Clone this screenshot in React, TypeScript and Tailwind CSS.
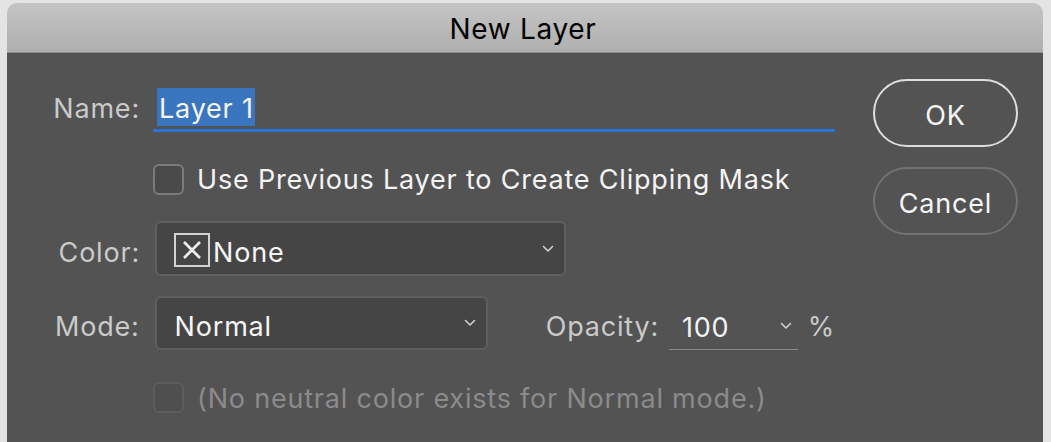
import React from 'react';

const Chevron: React.FC<{ className?: string }> = ({ className }) => (
  <svg width="12" height="8" viewBox="0 0 12 8" className={className}>
    <path d="M1.5 1.5 L6 6 L10.5 1.5" fill="none" stroke="currentColor" strokeWidth="1.6" strokeLinecap="round" strokeLinejoin="round" />
  </svg>
);

const Checkbox: React.FC<{ disabled?: boolean }> = ({ disabled }) => (
  <div
    className={`w-[31px] h-[31px] rounded-[6px] border-2 shrink-0 ${
      disabled ? 'border-[#5d5d5d] bg-[#4f4f4f]' : 'border-[#7b7b7b] bg-[#4a4a4a]'
    }`}
  />
);

export default function App() {
  return (
    <div className="w-[1051px] h-[442px] overflow-hidden bg-[#e4e4e4] pt-[3px] pl-[7px] font-['Inter','Liberation_Sans',sans-serif]">
      <div className="w-[1036px] h-[450px] rounded-t-[10px] overflow-hidden flex flex-col">
        {/* Title bar */}
        <div className="h-[50px] flex items-center justify-center bg-gradient-to-b from-[#c4c4c4] to-[#afafaf] border-b border-[#8e8e8e]">
          <span className="text-[28px] text-black tracking-[0.7px] mt-[3px] -ml-[4px]">New Layer</span>
        </div>

        {/* Body */}
        <div className="flex-1 bg-[#535353] flex">
          {/* Form */}
          <div className="w-[828px] flex flex-col text-[27px] tracking-[0.8px] whitespace-nowrap">
            {/* Name */}
            <div className="flex items-center h-[48px] mt-[31px]">
              <div className="w-[133px] text-right text-[#cacaca] pt-[3px]">Name:</div>
              <div className="ml-[13px] flex-1 h-full flex items-center border-b-[3px] border-[#2b72dc]">
                <span className="ml-[4px] pl-[2px] pr-[1px] h-[38px] leading-[41px] bg-[#3a75bf] text-[#f6f6f6]">Layer 1</span>
              </div>
            </div>

            {/* Clipping mask */}
            <div className="flex items-center h-[32px] mt-[31px] ml-[146px]">
              <Checkbox />
              <span className="ml-[13px] pt-[3px] text-[#f4f4f4]">Use Previous Layer to Create Clipping Mask</span>
            </div>

            {/* Color */}
            <div className="flex items-center mt-[26px]">
              <div className="w-[133px] text-right text-[#cacaca] pt-[9px]">Color:</div>
              <div className="ml-[15px] w-[411px] h-[55px] rounded-[6px] border-2 border-[#5f5f5f] bg-[#454545] flex items-center pl-[17px] pr-[10px]">
                <div className="w-[36px] h-[34px] shrink-0 border-2 border-[#d2d2d2] flex items-center justify-center mt-[2px]">
                  <svg width="22" height="22" viewBox="0 0 22 22">
                    <path d="M3 3 L19 19 M19 3 L3 19" stroke="#ececec" strokeWidth="2.8" />
                  </svg>
                </div>
                <span className="ml-[3px] pt-[9px] text-[#f6f6f6]">None</span>
                <Chevron className="ml-auto text-[#d0d0d0]" />
              </div>
            </div>

            {/* Mode / Opacity */}
            <div className="flex items-center mt-[20px]">
              <div className="w-[133px] text-right text-[#cacaca] pt-[9px]">Mode:</div>
              <div className="ml-[15px] w-[334px] h-[54px] rounded-[6px] border-2 border-[#5f5f5f] bg-[#454545] flex items-center pl-[18px] pr-[10px]">
                <span className="pt-[9px] text-[#f6f6f6]">Normal</span>
                <Chevron className="ml-auto text-[#d0d0d0]" />
              </div>
              <span className="ml-[58px] pt-[9px] text-[#cacaca]">Opacity:</span>
              <div className="ml-[10px] w-[129px] h-[48px] mt-[6px] flex items-center border-b border-[#8a8a8a] pl-[13px] pr-[6px]">
                <span className="pt-[5px] text-[#f2f2f2]">100</span>
                <Chevron className="ml-auto text-[#d0d0d0]" />
              </div>
              <span className="ml-[10px] pt-[9px] text-[#cacaca]">%</span>
            </div>

            {/* Neutral color (disabled) */}
            <div className="flex items-center h-[31px] mt-[32px] ml-[146px]">
              <Checkbox disabled />
              <span className="ml-[13px] pt-[3px] text-[#8b8b8b]">(No neutral color exists for Normal mode.)</span>
            </div>
          </div>

          {/* Buttons */}
          <div className="ml-[38px] flex flex-col pt-[26px] gap-[20px] text-[27px] tracking-[0.8px]">
            <button className="w-[145px] h-[68px] rounded-full border-2 border-[#dedede] text-[#f6f6f6] pt-[6px]">OK</button>
            <button className="w-[145px] h-[68px] rounded-full border-2 border-[#727272] text-[#f6f6f6] pt-[6px]">Cancel</button>
          </div>
        </div>
      </div>
    </div>
  );
}
